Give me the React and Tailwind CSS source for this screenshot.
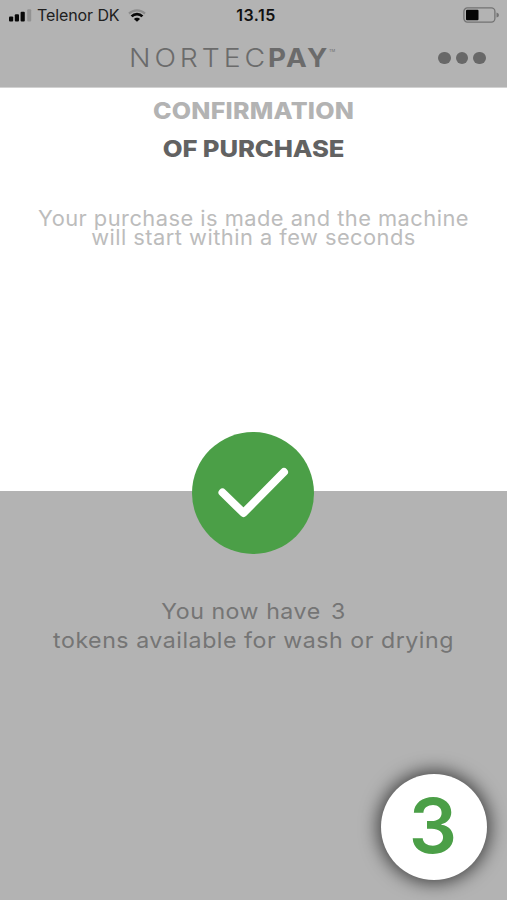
import React from "react";

function StatusBar() {
  return (
    <div className="grid h-[30px] grid-cols-[170px_1fr_170px] items-center text-[16px] leading-[20px] text-[#202020]">
      <div className="flex items-center pl-[9px]">
        <svg width="23" height="13" viewBox="0 0 23 13" className="mr-[5px] shrink-0">
          <rect x="0" y="7.5" width="4.2" height="5" rx="1" fill="#080808" />
          <rect x="5.8" y="5.2" width="4.2" height="7.3" rx="1" fill="#080808" />
          <rect x="11.6" y="2.7" width="4.2" height="9.8" rx="1" fill="#080808" />
          <rect x="18.2" y="0.2" width="4" height="12.3" rx="1" fill="#929292" />
        </svg>
        <span className="whitespace-nowrap tracking-[-0.1px]">Telenor DK</span>
        <svg width="18" height="13" viewBox="0 0 18 13" className="ml-[9px] shrink-0" fill="none">
          <path d="M1 4.6C5.5 .3 12.5 .3 17 4.6" stroke="#8d8d8d" strokeWidth="2.2" />
          <path d="M3.6 7.4C6.5 4.4 11.5 4.4 14.4 7.4" stroke="#080808" strokeWidth="2.7" />
          <path d="M9 12.8L5.9 9.9C7.4 8.3 10.6 8.3 12.1 9.9Z" fill="#080808" />
        </svg>
      </div>
      <div className="pl-[5px] text-center font-semibold tracking-[0.5px] text-[#111]">13.15</div>
      <div className="flex justify-end pr-[7px]">
        <svg width="37" height="16" viewBox="0 0 37 16">
          <rect x=".9" y=".9" width="31" height="14.2" rx="3.5" fill="none" stroke="#737373" strokeWidth="1.3" />
          <rect x="3" y="2.8" width="12.5" height="10.4" rx="1" fill="#050505" />
          <path d="M33.5 5.5Q36 6 36 8T33.5 10.5Z" fill="#737373" />
        </svg>
      </div>
    </div>
  );
}

export default function App() {
  return (
    <main className="flex h-[900px] w-[507px] flex-col overflow-hidden bg-white font-['Inter',sans-serif]">
      <header className="h-[88px] shrink-0 border-b border-[#d2d2d2] bg-[#b3b3b3]">
        <StatusBar />
        <div className="flex h-[56px] items-center pl-[129px] text-[#6b6b6b]">
          <div className="flex w-[206px] items-center whitespace-nowrap text-[26px] leading-[30px]">
            <span className="w-[139px] shrink-0 origin-left scale-x-[1.09] font-light tracking-[3.6px]">NORTEC</span>
            <span className="w-[61px] shrink-0 origin-left scale-x-[1.07] font-bold tracking-[2.2px]">PAY</span>
            <span className="-mt-[15px] text-[4px] leading-none">TM</span>
          </div>
          <div className="ml-[103px] flex gap-[5px]">
            <i className="size-[12.5px] rounded-full bg-[#686868]" />
            <i className="size-[12.5px] rounded-full bg-[#686868]" />
            <i className="size-[12.5px] rounded-full bg-[#686868]" />
          </div>
        </div>
      </header>
      <section className="h-[403px] shrink-0 text-center">
        <h1 className="pt-[4px] text-[23px] font-extrabold leading-[38px]">
          <span className="block scale-x-[1.087] tracking-[0.2px] text-[#b3b3b3]">CONFIRMATION</span>
          <span className="block scale-x-[1.115] tracking-[-0.1px] text-[#626262]">OF PURCHASE</span>
        </h1>
        <p className="mt-[41px] whitespace-nowrap text-[21px] leading-[19px] text-[#bcbcbc]">
          <span className="block scale-x-[1.04] tracking-[0.45px]">Your purchase is made and the machine</span>
          <span className="block scale-x-[1.04] tracking-[0.45px]">will start within a few seconds</span>
        </p>
      </section>
      <section className="flex h-[409px] shrink-0 flex-col bg-[#b3b3b3]">
        <div className="-mt-[59px] ml-[192px] size-[122px] rounded-full bg-[#4b9f47]">
          <svg width="122" height="122" viewBox="0 0 122 122" fill="none">
            <path d="M30.5 60.5L51.5 81L92 40" stroke="white" strokeWidth="8" strokeLinecap="round" strokeLinejoin="round" />
          </svg>
        </div>
        <p className="mt-[43px] whitespace-nowrap text-center text-[22px] leading-[29px] text-[#757575]">
          <span className="block scale-x-[1.053] tracking-[0.5px]">You now have <span className="ml-[3px]">3</span></span>
          <span className="block scale-x-[1.053] tracking-[0.5px]">tokens available for wash or drying</span>
        </p>
        <div className="mt-[119px] ml-[381px] flex size-[106px] shrink-0 items-center justify-center rounded-full bg-white text-[76px] leading-none text-[#4b9f47] shadow-[0_0_18px_3px_rgba(0,0,0,0.65)]">
          <span className="mb-[5px] mr-[2px] font-semibold">3</span>
        </div>
      </section>
    </main>
  );
}
